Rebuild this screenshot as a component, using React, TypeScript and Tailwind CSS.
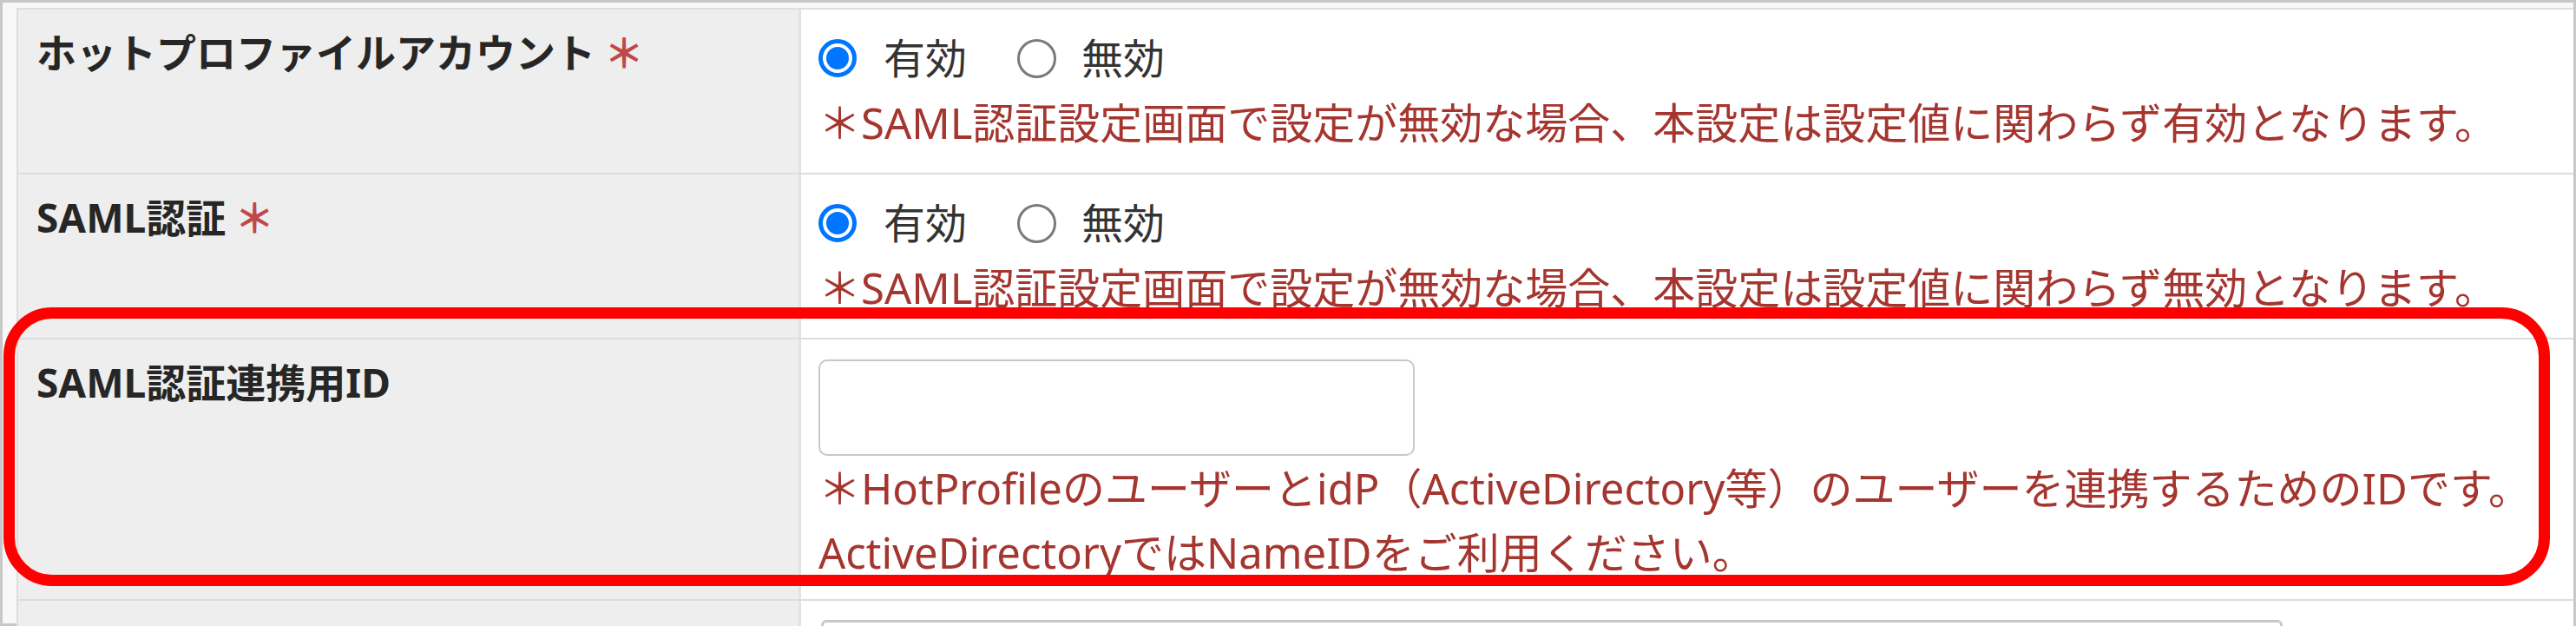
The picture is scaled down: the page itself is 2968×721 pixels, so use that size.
import React from 'react';

const jp = "[font-family:'Noto_Sans','Noto_Sans_CJK_JP',sans-serif]";

function Radio({ checked }: { checked: boolean }) {
  if (checked) {
    return (
      <span className="flex h-[44px] w-[44px] shrink-0 items-center justify-center rounded-full border-[5px] border-[#0075ff] bg-white">
        <span className="block h-[26px] w-[26px] rounded-full bg-[#0075ff]" />
      </span>
    );
  }
  return <span className="block h-[45px] w-[45px] shrink-0 rounded-full border-[3px] border-[#7a7a7a] bg-white" />;
}

function Label({ text, required }: { text: string; required?: boolean }) {
  return (
    <div className="w-[899px] shrink-0 bg-[#eeeeee] pl-[21px] pt-[12px] text-[46px] font-bold leading-[74px] text-[#262626]">
      {text}
      {required && <span className="ml-[10px] text-[#c04848]">＊</span>}
    </div>
  );
}

function Help({ children }: { children: React.ReactNode }) {
  return <p className="whitespace-nowrap text-[49px] leading-[74px] text-[#a5352f]">{children}</p>;
}

function EnableRow({ label, note }: { label: string; note: string }) {
  return (
    <div className="flex border-b-2 border-[#dddddd]">
      <Label text={label} required />
      <div className="flex-1 border-l-[3px] border-[#e2e2e2] bg-white pb-[21px] pl-[20px] pt-[19px]">
        <div className="flex h-[74px] items-center text-[48px] text-[#333333]">
          <Radio checked />
          <span className="ml-[31px]">有効</span>
          <span className="ml-[58px] flex">
            <Radio checked={false} />
          </span>
          <span className="ml-[29px]">無効</span>
        </div>
        <Help>{note}</Help>
      </div>
    </div>
  );
}

export default function App() {
  return (
    <div className={`relative h-[721px] w-[2968px] overflow-hidden bg-white ${jp}`}>
      <div className="h-full border-[3px] border-[#c8c8c8] bg-[#f8f8f8] pl-[16px] pt-[6px]">
        <div className="border-l-2 border-t-2 border-[#dddddd]">
          <EnableRow
            label="ホットプロファイルアカウント"
            note="＊SAML認証設定画面で設定が無効な場合、本設定は設定値に関わらず有効となります。"
          />
          <EnableRow
            label="SAML認証"
            note="＊SAML認証設定画面で設定が無効な場合、本設定は設定値に関わらず無効となります。"
          />

          <div className="flex border-b-2 border-[#dddddd]">
            <Label text="SAML認証連携用ID" />
            <div className="flex-1 border-l-[3px] border-[#e2e2e2] bg-white pb-[17px] pl-[20px] pt-[23px]">
              <input
                type="text"
                className="block h-[111px] w-[687px] rounded-[10px] border-2 border-[#c8c8c8] bg-white outline-none"
              />
              <Help>＊HotProfileのユーザーとidP（ActiveDirectory等）のユーザーを連携するためのIDです。</Help>
              <Help>ActiveDirectoryではNameIDをご利用ください。</Help>
            </div>
          </div>

          <div className="flex">
            <div className="h-[80px] w-[899px] shrink-0 bg-[#eeeeee]" />
            <div className="flex-1 border-l-[3px] border-[#e2e2e2] bg-white pl-[23px] pt-[22px]">
              <div className="h-[60px] w-[1684px] rounded-[6px] border-[3px] border-[#c8c8c8]" />
            </div>
          </div>
        </div>
      </div>

      {/* red highlight around the ID row */}
      <div className="pointer-events-none absolute left-[4px] top-[354px] h-[321px] w-[2934px] rounded-[56px] border-[13px] border-[#ff0000]" />
    </div>
  );
}
